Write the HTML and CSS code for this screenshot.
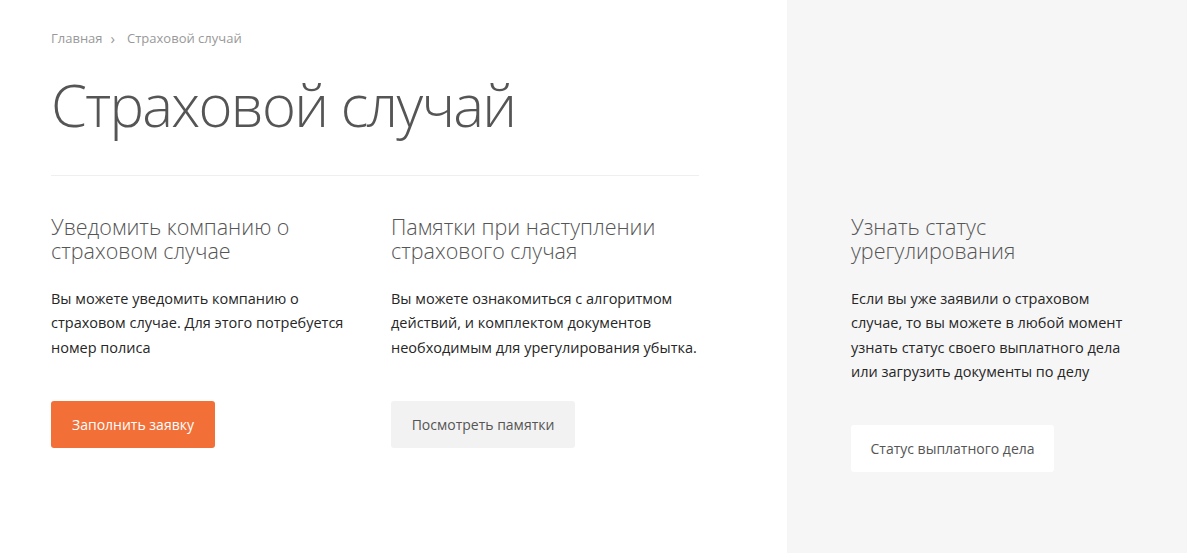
FILE: index.html
```html
<!DOCTYPE html>
<html lang="ru">
<head>
<meta charset="utf-8">
<title>Страховой случай</title>
<link rel="stylesheet" href="styles.css">
</head>
<body>
<div class="page">
  <main class="main">
    <nav class="crumbs">
      <a class="crumb" href="#">Главная</a>
      <span class="sep">›</span>
      <span class="crumb current">Страховой случай</span>
    </nav>
    <h1 class="title">Страховой случай</h1>
    <div class="divider"></div>
    <div class="cols">
      <section class="col col-first">
        <h2 class="col-title">Уведомить компанию о страховом случае</h2>
        <p class="col-text">Вы можете уведомить компанию о страховом случае. Для этого потребуется номер полиса</p>
        <a class="btn btn-orange" href="#">Заполнить заявку</a>
      </section>
      <section class="col col-second">
        <h2 class="col-title">Памятки при наступлении страхового случая</h2>
        <p class="col-text">Вы можете ознакомиться с алгоритмом действий, и комплектом документов необходимым для урегулирования убытка.</p>
        <a class="btn btn-gray" href="#">Посмотреть памятки</a>
      </section>
    </div>
  </main>
  <aside class="side">
    <h2 class="col-title">Узнать статус урегулирования</h2>
    <p class="col-text">Если вы уже заявили о страховом случае, то вы можете в любой момент узнать статус своего выплатного дела или загрузить документы по делу</p>
    <a class="btn btn-white" href="#">Статус выплатного дела</a>
  </aside>
</div>
</body>
</html>
```

FILE: styles.css
```css
* { box-sizing: border-box; }
html, body { margin: 0; padding: 0; background: #fff; }
body {
  font-family: "Open Sans", "Noto Sans", "Liberation Sans", sans-serif;
  color: #262626;
}
.page {
  display: flex;
  width: 1196px;
  height: 558px;
}
.main {
  width: 787px;
  padding: 30px 0 0 51px;
}
.crumbs {
  display: flex;
  align-items: center;
  font-size: 13px;
  line-height: 16px;
  color: #999;
}
.crumb { color: #999; text-decoration: none; }
.sep { margin: 0 12px 0 8px; font-size: 15px; }
.title {
  margin: 22px 0 0;
  font-size: 58px;
  line-height: 74px;
  font-weight: 300;
  color: #555;
  letter-spacing: -1.7px;
}
.divider {
  width: 648px;
  height: 1px;
  background: #efefef;
  margin-top: 33px;
}
.cols {
  display: flex;
  padding-top: 39px;
}
.col-first { width: 340px; }
.col-second { width: 308px; }
.col-title {
  margin: 0;
  font-size: 21.5px;
  line-height: 23.5px;
  font-weight: 300;
  color: #555;
}
.col-first .col-title { padding-right: 40px; }
.col-text {
  margin: 25px 0 0;
  font-size: 14.5px;
  line-height: 24.3px;
  color: #262626;
}
.col-first .col-text { padding-right: 30px; }
.btn {
  display: inline-flex;
  align-items: center;
  justify-content: center;
  height: 47px;
  margin-top: 41px;
  border-radius: 3px;
  font-size: 14px;
  text-decoration: none;
}
.btn-orange { width: 164px; background: #f27038; color: #fff; }
.btn-gray { width: 184px; background: #f2f2f2; color: #555; }
.btn-white { width: 203px; background: #fff; color: #555; }
.side {
  width: 400px;
  height: 553px;
  background: #f6f6f6;
  padding: 215px 40px 0 64px;
}
.side .col-title { padding-right: 120px; }
.side .col-text { padding-right: 20px; }
```
